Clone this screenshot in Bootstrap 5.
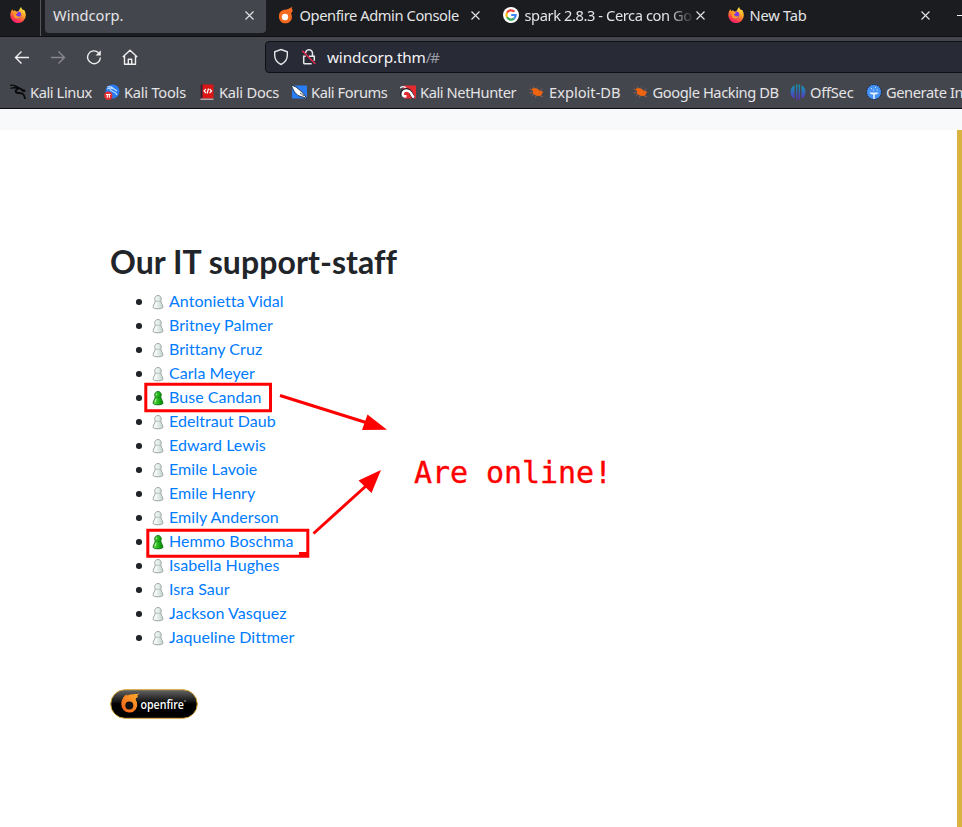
<!DOCTYPE html>
<html lang="en">
<head>
<meta charset="utf-8">
<meta name="viewport" content="width=device-width, initial-scale=1">
<title>Windcorp.</title>
<link href="https://cdn.jsdelivr.net/npm/bootstrap@5.3.0/dist/css/bootstrap.min.css" rel="stylesheet">
<style>
body{font-family:Lato,sans-serif;color:#212529;background:#fff;height:827px}
svg{flex:none;display:block}
.chrome{font-family:"Noto Sans",sans-serif;font-size:14.67px;line-height:20px;color:#e4e4e6;height:109px;background:#44464d;border-bottom:1px solid #0c0c0f}
.tabstrip{height:37px;background:#1b1c20;border-bottom:1px solid #0e0f12}
.pinned{width:41px;height:36px;padding:7px 0 0 10px;border-right:1px solid #55565b;flex:none}
.tab{height:33px;padding:0 10px 3px 8px;flex:none}
.tab-active{width:221px;margin-left:4px;padding-right:12px;background:#44464d;border-radius:0 0 4px 4px}
.tab-open{width:225px;padding-left:12px}
.tab-open .tab-title{margin-left:5.5px}
.tab-open svg:last-child{margin-right:1px}
.tab-title{min-width:0;flex:1;white-space:nowrap;overflow:hidden}
.tab-cut{-webkit-mask-image:linear-gradient(90deg,#000 143px,transparent 170px);mask-image:linear-gradient(90deg,#000 143px,transparent 170px)}
.tight{letter-spacing:-.41px}
.snug{letter-spacing:-.24px}
.toolbar{height:40px;padding-left:4px}
.tool{width:36px;height:36px}
.urlbar{height:32px;width:710px;margin-left:117px;background:#282a36;border:1px solid #101116;border-radius:4px;padding-left:7px;font-size:15.3px;color:#f4f4f6}
.urlbar .host{margin-left:10px;letter-spacing:-.15px}
.urlbar .path{color:#9c9da5;letter-spacing:-1.4px}
.urlbar .lock{margin-left:12px}
.marks{display:grid;grid-template-columns:94px 95px 92px 109px 129px 103.5px 157.5px 76px 110px;padding:5px 0 0 10px;white-space:nowrap;width:976px}
.mark-item{display:flex;gap:4px;align-items:center}
.strip{height:21px;background:#f8f9fa}
.page{height:697px;padding:113px 0 0 110px;border-right:5px solid #d9b33f;font-variant-ligatures:none}
.page h1{font-size:32px;font-weight:700;line-height:38.4px;letter-spacing:.07px}
.staff{padding-left:40px;line-height:24px;list-style:none}
.staff li{display:flex;align-items:center;height:24px}
.staff li::before{content:"";width:5.600px;height:5.600px;border-radius:50%;background:#212529;margin:1px 10.400px 0 -14px;flex:none}
.staff a{color:#007bff;text-decoration:none;margin-left:3px;letter-spacing:.05px}
.staff li svg{margin:2px 0 0 -2px}
.logo{margin-top:40px}
.notes{left:0;top:0;pointer-events:none}
.note-text{left:414px;top:453px;font:30px/40px "DejaVu Sans Mono",monospace;letter-spacing:-.05px;color:red;-webkit-text-stroke:.35px red}
</style>
<script src="https://cdn.jsdelivr.net/npm/bootstrap@5.3.0/dist/js/bootstrap.bundle.min.js"></script>
</head>
<body class="position-relative overflow-hidden">
<svg width="0" height="0" class="position-absolute">
<defs>
<linearGradient id="fx" x1=".8" y1="0" x2=".3" y2="1"><stop offset="0" stop-color="#fff04a"/><stop offset=".45" stop-color="#ff9a24"/><stop offset=".8" stop-color="#ff3850"/><stop offset="1" stop-color="#f01a80"/></linearGradient>
<linearGradient id="os" x1="0" y1="0" x2="0" y2="1"><stop offset="0" stop-color="#0d9fb0"/><stop offset="1" stop-color="#5a2fc0"/></linearGradient>
<linearGradient id="off"><stop offset="0" stop-color="#fff"/><stop offset=".5" stop-color="#e4eeeb"/><stop offset="1" stop-color="#c3d4d0"/></linearGradient>
<linearGradient id="on"><stop offset="0" stop-color="#7be35a"/><stop offset=".5" stop-color="#22b91a"/><stop offset="1" stop-color="#068406"/></linearGradient>
<linearGradient id="flame" x1="1" y1="0" x2="0" y2="1"><stop offset="0" stop-color="#ffb32e"/><stop offset="1" stop-color="#f25a18"/></linearGradient>
<linearGradient id="gloss" x1="0" y1="0" x2="0" y2="1"><stop offset="0" stop-color="#666"/><stop offset=".4" stop-color="#181818"/><stop offset=".5" stop-color="#000"/></linearGradient>
<symbol id="firefox" viewBox="0 0 16 16"><path fill="url(#fx)" d="M2.3 2.200 3.200 4 5 3.300 6 4.500c1-.2 2.200-.5 2.900-1.100C9.400 2.500 10 1 11.200 0c.1 1.600 1 2.300 1.900 3.100l.9-.3C15.200 4.500 15.800 6.300 15.800 8.300A7.700 7.700 0 0 1 .3 8.400C.3 6 .9 4.300 2.300 2.200Z"/><circle cx="7.900" cy="8" r="3.400" fill="#7a38e8"/><path fill="#ff9a24" d="M3.500 5.500c1.500-1 3.500-.8 4.800.2L6 7.300c0 2 3 3 5 1.200-.5 3-4.700 4-6.800 1.500Z"/></symbol>
<symbol id="fire" viewBox="0 0 16 18"><path fill="#f46a1f" d="M14.600.5c-1 1.300-1 2.200-.2 3 .5.700.200 1.500-.2 2.200L13 7.500A6.500 6.500 0 1 1 1 10c0-3.500 2.200-5.800 5.400-6.200C9.500 3.400 12 2.500 14.600.5Z"/><circle cx="7" cy="11" r="3.200" fill="#fff"/></symbol>
<symbol id="close" viewBox="0 0 9 9"><path d="m.5.5 8 8m0-8-8 8" stroke="#e4e4e6" stroke-width="1.100" fill="none"/></symbol>
<symbol id="bug" viewBox="0 0 16 16"><path fill="#ee6410" d="M2 5.500 4.500 4c2-.2 4.500.8 6 2.500l2.500.8 1.500.7-1.500 1 .3 1.500-1.300.2-.2 1.500-1.800-.4c-2.800.4-5-.8-6.500-3.300L4 7Z"/><path d="M5 4.500 4.500 2.500M8 5V3.500M11.500 6.500l1.500-2M2 5.500.5 5M3 8.500l-2.500.5M5 10.500l-2 1M7 12l-.5 1.500M11.500 12l2.500.7" stroke="#b9775a" stroke-width=".6" fill="none"/></symbol>
<symbol id="pawn" viewBox="0 0 16 16"><path d="M8 1.500a3.300 3.300 0 0 0-3 4.700c.3.500.3.800 0 1.800C4.500 10 3.200 11 3 13c0 1.200 2 1.800 5 1.800s5-.6 5-1.800C12.800 11 11.500 10 11 8c-.3-1-.3-1.300 0-1.800a3.300 3.300 0 0 0-3-4.700Z"/><path d="M5.400 6.700c1.500 1 3.700 1 5.200 0" fill="none" stroke-opacity=".6"/><path d="M6.500 3.600v1.300M6.200 9 5.200 12" stroke="#fff" stroke-opacity=".7" fill="none"/></symbol>
</defs>
</svg>

<header class="chrome overflow-hidden">
  <div class="tabstrip d-flex">
    <div class="pinned"><svg width="16" height="16"><use href="#firefox"/></svg></div>
    <div class="tab tab-active d-flex align-items-center"><span class="tab-title">Windcorp.</span><svg width="9" height="9"><use href="#close"/></svg></div>
    <div class="tab tab-open d-flex align-items-center"><svg width="16" height="18"><use href="#fire"/></svg><span class="tab-title tight">Openfire Admin Console</span><svg width="9" height="9"><use href="#close"/></svg></div>
    <div class="tab tab-open d-flex align-items-center"><svg width="16" height="16" viewBox="0 0 16 16"><circle cx="8" cy="8" r="8" fill="#fff"/><g fill="none" stroke-width="2.200"><path stroke="#ea4335" d="M4 5.700A4.700 4.700 0 0 1 11.400 4.700"/><path stroke="#fbbc05" d="M4 5.700a4.700 4.700 0 0 0 0 4.600"/><path stroke="#34a853" d="M4 10.300a4.700 4.700 0 0 0 7 1.300"/><path stroke="#4285f4" d="M8.200 8h4.500c0 1.500-.7 2.800-1.700 3.600"/></g></svg><span class="tab-title tab-cut tight">spark 2.8.3 - Cerca con Go</span><svg width="9" height="9"><use href="#close"/></svg></div>
    <div class="tab tab-open d-flex align-items-center"><svg width="16" height="16"><use href="#firefox"/></svg><span class="tab-title snug">New Tab</span><svg width="9" height="9"><use href="#close"/></svg></div>
    <svg width="8" height="30" style="margin-left:16px"><path d="M0 15.500h8" stroke="#eee"/></svg>
  </div>
  <div class="toolbar d-flex align-items-center">
    <div class="d-flex">
      <div class="tool d-flex align-items-center justify-content-center"><svg width="16" height="16" fill="none" stroke="#eee" stroke-width="1.400"><path d="M15 8.500H1.500M7.500 2.500l-6 6 6 6"/></svg></div>
      <div class="tool d-flex align-items-center justify-content-center"><svg width="16" height="16" fill="none" stroke="#88898e" stroke-width="1.400"><path d="M1 8.500h13.500M8.500 2.500l6 6-6 6"/></svg></div>
      <div class="tool d-flex align-items-center justify-content-center"><svg width="16" height="16" fill="none" stroke="#eee" stroke-width="1.400"><path d="M12.500 3.700A6.400 6.400 0 1 0 14.400 8.500"/><path d="M14.800 1.200v5.200H9.600Z" fill="#eee" stroke="none"/></svg></div>
      <div class="tool d-flex align-items-center justify-content-center"><svg width="16" height="16" fill="none" stroke="#eee" stroke-width="1.400" stroke-linejoin="round"><path d="M.8 8 8 1.200 15.200 8M2.500 7v8.200h11V7M6.300 15v-4.800h3.400V15"/></svg></div>
    </div>
    <div class="urlbar d-flex align-items-center flex-shrink-0">
      <svg width="16" height="18" fill="none" stroke="#e6e6e8" stroke-width="1.400"><path d="m8 1.500 6.300 2.300v3.700c0 4-2.300 7-6.300 9-4-2-6.300-5-6.300-9V3.800Z"/></svg>
      <svg class="lock" width="16" height="18" fill="none" stroke="#e6e6e8" stroke-width="1.500"><path d="M4.500 5.500A3.500 3.500 0 0 1 11.500 5v3M2.700 15.700V8.200h2M8 8.200h5.300v4.500M2.700 15.700h8"/><path d="m1.200 2.700 13.300 13.300" stroke="#e22850"/></svg>
      <span class="host">windcorp.thm</span><span class="path">/#</span>
    </div>
  </div>
  <div class="marks">
    <div class="mark-item tight"><svg width="16" height="16" fill="none" stroke="#08090b"><path d="M0 1.500c3-1 6 0 8.500 2M.5 4.500C4 3 7 3.500 9.500 4.500" stroke-width="1.300"/><path d="M4 3.500c4-.5 7 1 9.500 3.500l1.500-1M9 4.500C4.500 6 4.500 9 9 9s5.500 2 6 6" stroke-width="1.800"/><path d="m11 5 3 1.500 1.500 1.500"/></svg>Kali Linux</div>
    <div class="mark-item snug"><svg width="16" height="16"><circle cx="8.500" cy="7.500" r="7" fill="#2879f3"/><path d="M3 5c4-2 8 0 10 2M6 5c0 3 6 2 7 6M3 3c3-.8 5 0 6 1" fill="none" stroke="#b8daff" stroke-width="1.200"/><circle cx="4.300" cy="11.700" r="4.200" fill="#e72c2f"/><path d="M2 10.500h4.600M3.300 10.500v3.200m2-3.200v3.200" stroke="#fff" stroke-width="1.100"/></svg>Kali Tools</div>
    <div class="mark-item snug"><svg width="16" height="16"><path d="M1.500.5h13v14h-13Z" fill="#dc1515"/><path d="M1.500.5h2v14h-2Z" fill="#27283c"/><path d="M1.500 14.500h13v1.500h-13Z" fill="#b9a4ab"/><path d="m7 5-2 2 2 2m3.600-4 2 2-2 2M9.500 4.500l-1.400 5" stroke="#fff" stroke-width="1.200" fill="none"/></svg>Kali Docs</div>
    <div class="mark-item tight"><svg width="16" height="16"><path d="M1 1.500h15v13H1Z" fill="#287df4"/><path d="m0 1 5 2 6 5 5 6.500-3-1-6-2L3.500 8Z" fill="#fff" stroke="#16202e" stroke-width=".8"/><path d="M9 9l4 3" stroke="#18202c" stroke-width=".7"/></svg>Kali Forums</div>
    <div class="mark-item tight"><svg width="16" height="16"><path d="M3 1.500h13v13H4Z" fill="#e52b32"/><path d="M0 4c2-2 5-1.500 6 0" fill="none" stroke="#dfe3e8" stroke-width="1.500"/><path d="M2.500 12c-2-6 5-8 8-4 1.500 2 1.500 4 3.500 6" fill="none" stroke="#141820" stroke-width="3.400"/><path d="M3 12c-2-6 5-7 7.500-3.500 1.500 2 1.500 3.500 3.500 5M3 12l3.500.5" fill="none" stroke="#fff" stroke-width="2.500"/></svg>Kali NetHunter</div>
    <div class="mark-item"><svg width="16" height="16"><use href="#bug"/></svg>Exploit-DB</div>
    <div class="mark-item tight"><svg width="16" height="16"><use href="#bug"/></svg>Google Hacking DB</div>
    <div class="mark-item snug"><svg width="16" height="16" fill="url(#os)"><path d="M4.500 1.300v13.400a7.600 7.600 0 0 1 0-13.400ZM11.500 1.300v13.400a7.600 7.600 0 0 0 0-13.400ZM6 .6h1.300v14.800H6ZM8.700.6H10v14.800H8.700Z"/></svg>OffSec</div>
    <div class="mark-item tight"><svg width="16" height="16"><circle cx="8" cy="8" r="7.400" fill="#4592f5" stroke="#14233d" stroke-dasharray="1.500 1"/><path d="M3.500 8.500h9c-.5 1.500-2 2-3.700 2v4.500H7.200v-4.500c-1.700 0-3.200-.5-3.700-2Z" fill="#e5f1ff"/><path d="M5 4.500h1M9 3.500h1M7 6h1M10.500 6h1" stroke="#d5e7ff"/></svg>Generate In</div>
  </div>
</header>

<div class="strip"></div>
<main class="page">
  <h1 class="mb-2">Our IT support-staff</h1>
  <ul class="staff mb-0" id="staff"></ul>
  <svg class="logo" width="88" height="30" viewBox="0 0 88 30"><rect x=".7" y=".7" width="86.600" height="28.600" rx="14.300" fill="url(#gloss)" stroke="#d7a93b" stroke-width="1"/><path fill="url(#flame)" d="M30 4.200c-2.500 1.500-3.500 2.800-1.800 3.800-2 .5-3 1.500-2.200 3.500l1 2A8 8 0 1 1 11.300 15c0-2 .4-3.500 1.200-5 1-2.300 2.500-4 5-4.500l-.5 1.200C21 4.500 26 5.500 30 4.200Z"/><circle cx="19.300" cy="16.500" r="4" fill="#101010"/><text x="30.500" y="19.500" fill="#fff" font-family="Open Sans, sans-serif" font-size="12" font-weight="600" textLength="43.500" lengthAdjust="spacingAndGlyphs">openfire</text><circle cx="75" cy="12" r=".7" fill="#ddd"/></svg>
</main>

<svg class="notes position-absolute" width="962" height="827" fill="none" stroke="red" stroke-width="3">
  <path d="M145.800 384.200h124.700v26.600H145.800ZM147.800 530.200h160v26h-160ZM299 553.500h8"/>
  <path d="m280 395.500 86 27M313.500 533.500l53-48"/>
  <path d="m367.500 414.500 19.500 15.200-25 .3ZM381 470l-22.500 10.500 13 12.500Z" fill="red" stroke="none"/>
</svg>
<div class="note-text position-absolute">Are online!</div>

<script>
const names = ["Antonietta Vidal","Britney Palmer","Brittany Cruz","Carla Meyer","Buse Candan","Edeltraut Daub","Edward Lewis","Emile Lavoie","Emile Henry","Emily Anderson","Hemmo Boschma","Isabella Hughes","Isra Saur","Jackson Vasquez","Jaqueline Dittmer"];
const online = ["Buse Candan","Hemmo Boschma"];
document.getElementById("staff").innerHTML = names.map(n => {
  const paint = online.includes(n) ? 'fill="url(#on)" stroke="#0a6b10"' : 'fill="url(#off)" stroke="#929d9a"';
  return `<li><svg width="16" height="16" ${paint} stroke-width=".9"><use href="#pawn"/></svg><a href="#">${n}</a></li>`;
}).join("");
</script>
</body>
</html>
